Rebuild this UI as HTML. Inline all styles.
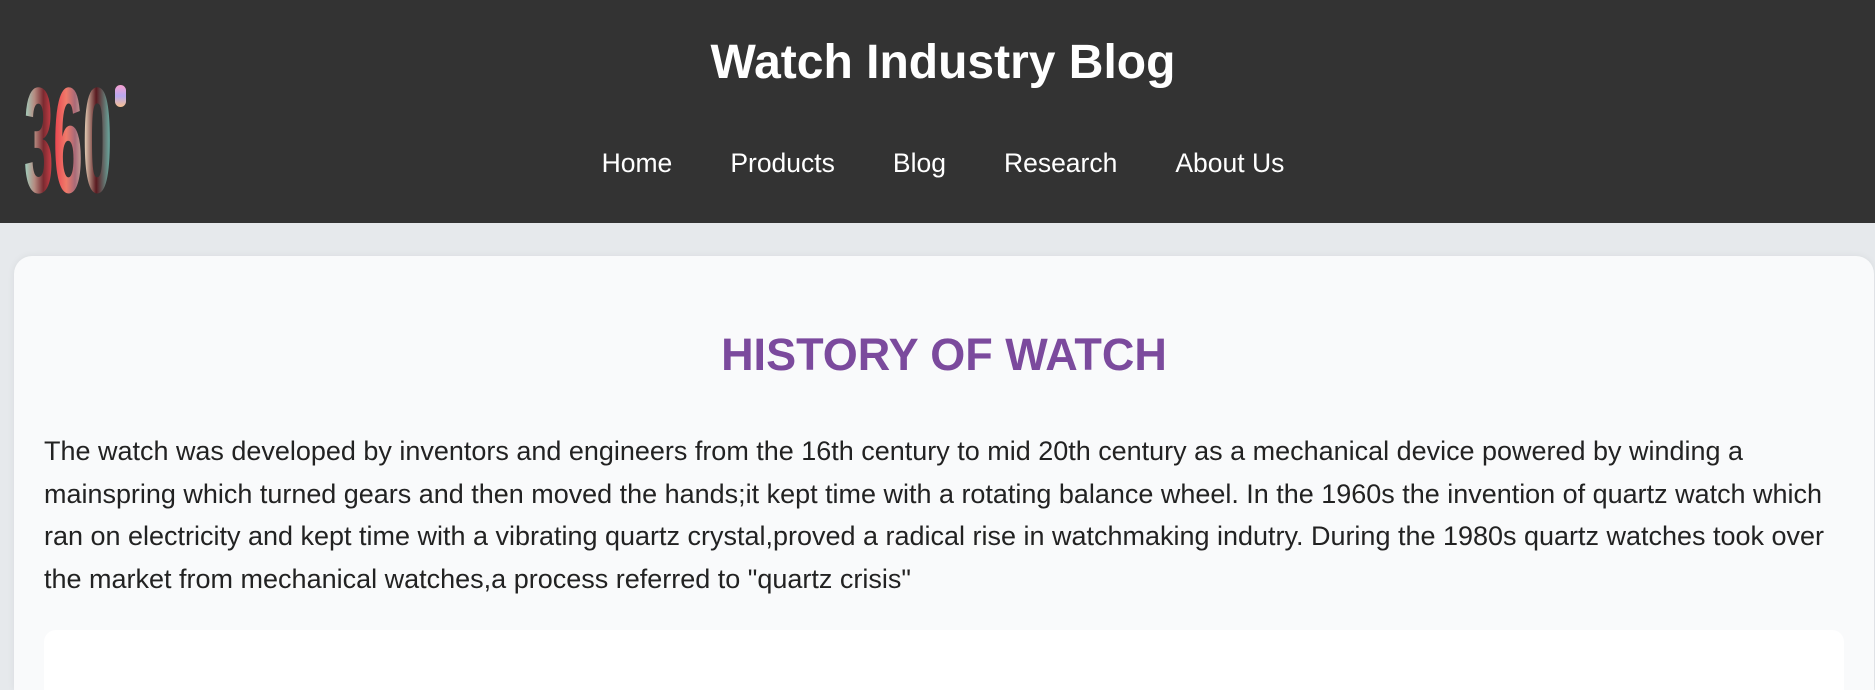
<!DOCTYPE html>
<html><head><meta charset="utf-8"><style>
*{margin:0;padding:0;box-sizing:border-box}
html,body{width:1875px;height:690px;overflow:hidden}
body{background:#e6e9ec;font-family:"Liberation Sans",Arial,sans-serif;position:relative}
header{position:absolute;left:0;top:0;width:1875px;height:223px;background:#333}
.title{position:absolute;left:0;width:1886px;top:36px;line-height:54px;text-align:center;color:#fff;font-weight:bold;font-size:48px}
nav{position:absolute;left:0;width:1886px;top:148px;display:flex;justify-content:center;gap:58px;color:#fff;font-size:26.5px;line-height:30px}
.logo{position:absolute;left:22px;top:78px}
.card{position:absolute;left:14px;top:256px;width:1860px;height:434px;background:#f9fafb;border-radius:18px 18px 0 0;box-shadow:0 0 8px rgba(0,0,0,.06);overflow:hidden}
h1{position:absolute;left:0;width:1860px;top:74px;line-height:50px;text-align:center;color:#7b4a9d;font-size:45px;font-weight:bold}
.inner{position:absolute;left:30px;top:374px;width:1800px;height:60px;background:#fff;border-radius:12px 12px 0 0}
svg.txt{position:absolute;left:0;top:0}
</style></head><body>
<header>
<svg class="logo" width="110" height="120" viewBox="0 0 110 120">
<defs><linearGradient id="g" x1="0" y1="0" x2="1" y2="0">
<stop offset="0" stop-color="#9fd6c4"/><stop offset=".12" stop-color="#b58a80"/><stop offset=".22" stop-color="#7a2a30"/><stop offset=".35" stop-color="#e8454f"/><stop offset=".48" stop-color="#f07a6a"/><stop offset=".58" stop-color="#a86a78"/><stop offset=".7" stop-color="#d9c0aa"/><stop offset=".82" stop-color="#5a1a20"/><stop offset="1" stop-color="#6cc0b4"/></linearGradient>
<linearGradient id="p" x1="0" y1="0" x2="0" y2="1"><stop offset="0" stop-color="#f7a0d0"/><stop offset=".5" stop-color="#b8a8f0"/><stop offset="1" stop-color="#f7c090"/></linearGradient></defs>
<text x="2" y="114" font-size="150" font-weight="bold" font-family="Liberation Sans" textLength="88" lengthAdjust="spacingAndGlyphs" fill="url(#g)">360</text>
<rect x="93" y="7" width="11" height="22" rx="5.5" fill="url(#p)"/>
</svg>
<div class="title">Watch Industry Blog</div>
<nav><span>Home</span><span>Products</span><span>Blog</span><span>Research</span><span>About Us</span></nav>
</header>
<div class="card">
<h1>HISTORY OF WATCH</h1>
<div class="inner"></div>
</div>
<svg class="txt" width="1875" height="690" font-family="Liberation Sans" font-size="27" fill="#222">
<text x="44" y="460" textLength="1699" lengthAdjust="spacingAndGlyphs">The watch was developed by inventors and engineers from the 16th century to mid 20th century as a mechanical device powered by winding a</text>
<text x="44" y="503" textLength="1778" lengthAdjust="spacingAndGlyphs">mainspring which turned gears and then moved the hands;it kept time with a rotating balance wheel. In the 1960s the invention of quartz watch which</text>
<text x="44" y="545" textLength="1780" lengthAdjust="spacingAndGlyphs">ran on electricity and kept time with a vibrating quartz crystal,proved a radical rise in watchmaking indutry. During the 1980s quartz watches took over</text>
<text x="44" y="588" textLength="867" lengthAdjust="spacingAndGlyphs">the market from mechanical watches,a process referred to "quartz crisis"</text>
</svg>
</body></html>
